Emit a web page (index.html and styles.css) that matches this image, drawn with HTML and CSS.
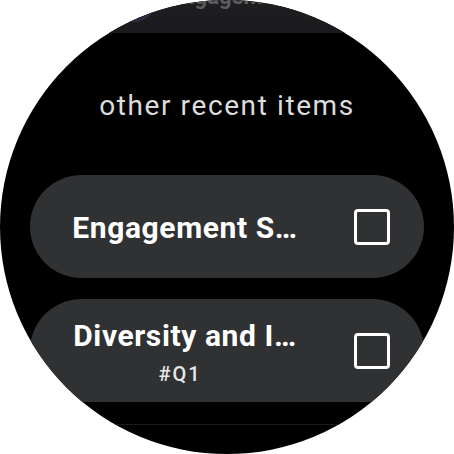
FILE: index.html
```html
<!DOCTYPE html>
<html>
<head>
<meta charset="utf-8">
<link rel="stylesheet" href="styles.css">
</head>
<body>
<div class="watch">
  <div class="prev">
    <span class="prev-avatar"></span>
    <span class="prev-text">Engagement</span>
  </div>
  <div class="header">other recent items</div>
  <div class="chip chip-one">
    <div class="label">
      <div class="title">Engagement S…</div>
    </div>
    <span class="check"></span>
  </div>
  <div class="chip chip-two">
    <div class="label">
      <div class="title">Diversity and I…</div>
      <div class="sub">#Q1</div>
    </div>
    <span class="check"></span>
  </div>
  <div class="next"></div>
</div>
</body>
</html>
```
FILE: styles.css
```css
html, body {
  margin: 0;
  padding: 0;
  background: #ffffff;
}
.watch {
  width: 454px;
  height: 454px;
  border-radius: 50%;
  overflow: hidden;
  background: #000000;
  display: flex;
  flex-direction: column;
  align-items: center;
  font-family: Roboto, "Noto Sans", sans-serif;
}
.prev {
  width: 100%;
  height: 33px;
  flex: none;
  background: linear-gradient(180deg, #1f1f22 0%, #1a1a1c 100%);
  display: flex;
  justify-content: center;
  align-items: flex-end;
  overflow: hidden;
  position: relative;
}
.prev-avatar {
  position: absolute;
  left: 112px;
  top: -22px;
  width: 44px;
  height: 44px;
  border-radius: 50%;
  background: #1c1b22;
  box-shadow: inset -2px -2px 3px #34314a;
}
.prev-text {
  font-size: 22px;
  font-weight: 700;
  color: #5c5c5e;
  line-height: 22px;
  margin-bottom: 25px;
  margin-left: 10px;
}
.header {
  margin-top: 56px;
  font-size: 28px;
  line-height: 34px;
  color: #dcdcdc;
  letter-spacing: 1.6px;
}
.chip {
  width: 394px;
  height: 103px;
  flex: none;
  box-sizing: border-box;
  border-radius: 52px;
  background: #303133;
  display: flex;
  align-items: center;
  padding: 0 34px 0 40px;
}
.chip-one {
  margin-top: 52px;
}
.chip-two {
  margin-top: 21px;
}
.label {
  flex: 1;
  min-width: 0;
  padding-top: 3px;
  display: flex;
  flex-direction: column;
  align-items: center;
  color: #ffffff;
}
.title {
  font-size: 30px;
  font-weight: 700;
  line-height: 34px;
  letter-spacing: 0.6px;
  white-space: nowrap;
}
.sub {
  font-size: 20px;
  font-weight: 500;
  line-height: 24px;
  color: #e8e8e8;
  letter-spacing: 2px;
  margin-top: 9px;
  margin-right: 10px;
}
.check {
  flex: none;
  width: 30px;
  height: 30px;
  border: 3px solid #ffffff;
  border-radius: 4px;
  margin-left: 54px;
}
.next {
  width: 100%;
  height: 1px;
  flex: none;
  margin-top: 22px;
  background: #1b1b1b;
}
```
